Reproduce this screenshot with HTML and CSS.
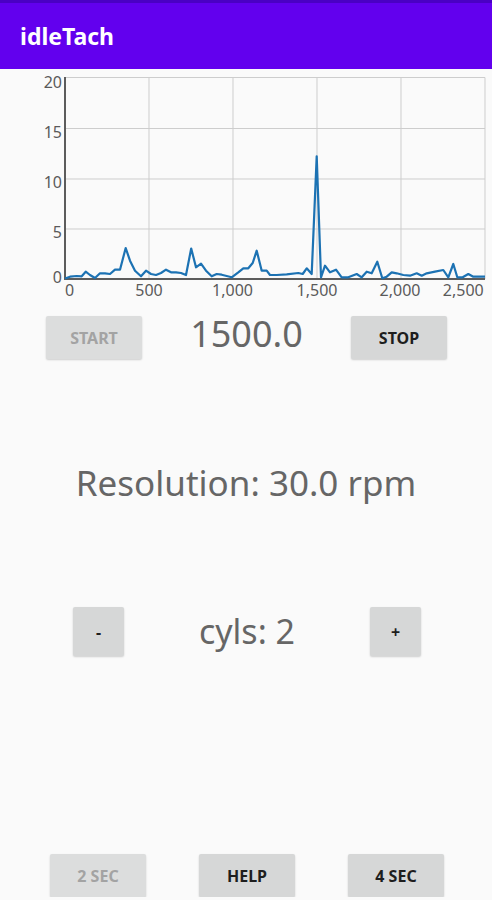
FILE: index.html
```html
<!DOCTYPE html>
<html lang="en">
<head>
    <meta charset="UTF-8">
    <title>idleTach</title>
    <link rel="stylesheet" href="styles.css">
</head>
<body>

    <div class="appbar">
        <h1>idleTach</h1>
    </div>

    <svg class="graph" width="492" height="242" viewBox="0 70 492 242">
        <!-- grid -->
        <g class="grid">
            <line x1="65" y1="78.5" x2="485" y2="78.5"/>
            <line x1="65" y1="129.5" x2="485" y2="129.5"/>
            <line x1="65" y1="180" x2="485" y2="180"/>
            <line x1="65" y1="230" x2="485" y2="230"/>
            <line x1="149" y1="78.5" x2="149" y2="280"/>
            <line x1="233" y1="78.5" x2="233" y2="280"/>
            <line x1="317" y1="78.5" x2="317" y2="280"/>
            <line x1="401" y1="78.5" x2="401" y2="280"/>
            <line x1="485" y1="78.5" x2="485" y2="280"/>
        </g>
        <g class="axis">
            <line x1="65" y1="78" x2="65" y2="281"/>
            <line x1="64" y1="280" x2="485" y2="280"/>
        </g>
        <g class="tick tick-y">
            <text x="62" y="88.5">20</text>
            <text x="62" y="138.5">15</text>
            <text x="62" y="188.5">10</text>
            <text x="62" y="239">5</text>
            <text x="62" y="284">0</text>
        </g>
        <g class="tick tick-x">
            <text x="69.5" y="297">0</text>
            <text x="149" y="297">500</text>
            <text x="232.5" y="297">1,000</text>
            <text x="317" y="297">1,500</text>
            <text x="400" y="297">2,000</text>
            <text x="463.3" y="297">2,500</text>
        </g>
        <polyline class="series" points="65,279.5 70,277.7 76.7,277 81.7,277.3 85.7,272.7 90,276 95,279 100,274.3 105,274.3 110,275 115,270.7 120,270.7 125.7,249 130,261.7 135,271.7 141,277.3 146,271.7 151,275 156,276 161,274 166,270.7 171,273.3 176,273.3 181,274 186,276 191.2,249.5 196,268.3 201,264.7 206,271.7 211.7,277.3 216.7,275 221.7,275.7 231.7,278.3 238.3,273.3 243.3,269.3 248.3,269.3 252.7,264 256.7,251.7 261.7,271.7 266.7,271.7 270,276 276.7,276 286.7,275.3 298.3,274 302.7,275 306.7,269.3 311.7,275 316.7,157.3 321,278.3 325,266.7 330,273.3 336,270.7 341.7,278.3 348.3,278.3 356.7,275 361.7,278.3 366.7,272.7 371.7,274.3 377.3,262.7 382.3,279.3 386.7,277.7 391.7,273.3 396.7,274.3 403.3,276 410,276.7 416.7,274.3 421.7,276.7 426.7,274.3 435,272.7 443.3,271 448.3,278.3 453.3,265 457.3,278.3 462.7,278.3 468.3,275 473.3,277.7 478.3,277.7 485,277.7"/>
    </svg>

    <div class="row run-row">
        <button class="btn btn-wide" disabled>START</button>
        <span class="rpm">1500.0</span>
        <button class="btn btn-wide">STOP</button>
    </div>

    <p class="resolution">Resolution: 30.0 rpm</p>

    <div class="row cyl-row">
        <button class="btn btn-small">-</button>
        <span class="cyls">cyls: 2</span>
        <button class="btn btn-small">+</button>
    </div>

    <div class="row bottom-row">
        <button class="btn btn-wide" disabled>2 SEC</button>
        <button class="btn btn-wide">HELP</button>
        <button class="btn btn-wide">4 SEC</button>
    </div>

</body>
</html>
```

FILE: styles.css
```css
body {
    margin: 0;
    background-color: #fafafa;
    font-family: "Noto Sans", "Open Sans", sans-serif;
}
.appbar {
    height: 66px;
    border-top: 3px solid #4a00c4;
    background-color: #6200ee;
    display: flex;
    align-items: center;
    padding-left: 20px;
}
.appbar h1 {
    margin: 0;
    color: #fff;
    font-size: 23px;
    line-height: 1;
    font-weight: bold;
}
.graph {
    display: block;
}
.grid line {
    stroke: #cdcdcd;
    stroke-width: 1;
}
.axis line {
    stroke: #5c5c5c;
    stroke-width: 2;
}
.tick text {
    font-family: "Noto Sans", sans-serif;
    font-size: 16px;
    fill: #5a5a5a;
}
.tick-y text {
    text-anchor: end;
}
.tick-x text {
    text-anchor: middle;
}
.series {
    fill: none;
    stroke: #1c72b3;
    stroke-width: 2.2;
    stroke-linejoin: round;
}
.row {
    display: flex;
    justify-content: space-between;
    align-items: center;
}
.run-row {
    margin-top: 5px;
    padding: 0 45px 0 46px;
}
.btn {
    border: none;
    border-radius: 2px;
    background-color: #d6d7d7;
    box-shadow: 0 1px 2px rgba(0, 0, 0, 0.18);
    color: #1e1e1e;
    font-family: "Noto Sans", sans-serif;
    font-size: 16px;
    font-weight: bold;
    padding: 0;
}
.btn[disabled] {
    background-color: #dcdddd;
    color: #a3a3a3;
}
.btn-wide {
    width: 96px;
    height: 43px;
}
.btn-small {
    width: 51px;
    height: 49px;
}
.rpm {
    font-size: 36px;
    line-height: 36px;
    padding-bottom: 7px;
    color: #666;
}
.resolution {
    margin: 100px 0 0;
    text-align: center;
    font-size: 35px;
    line-height: 48px;
    color: #666;
}
.cyl-row {
    margin-top: 100px;
    padding: 0 71px 0 73px;
}
.cyls {
    font-size: 34px;
    line-height: 49px;
    color: #666;
}
.bottom-row {
    margin-top: 198px;
    padding: 0 48px 0 50px;
}
```
